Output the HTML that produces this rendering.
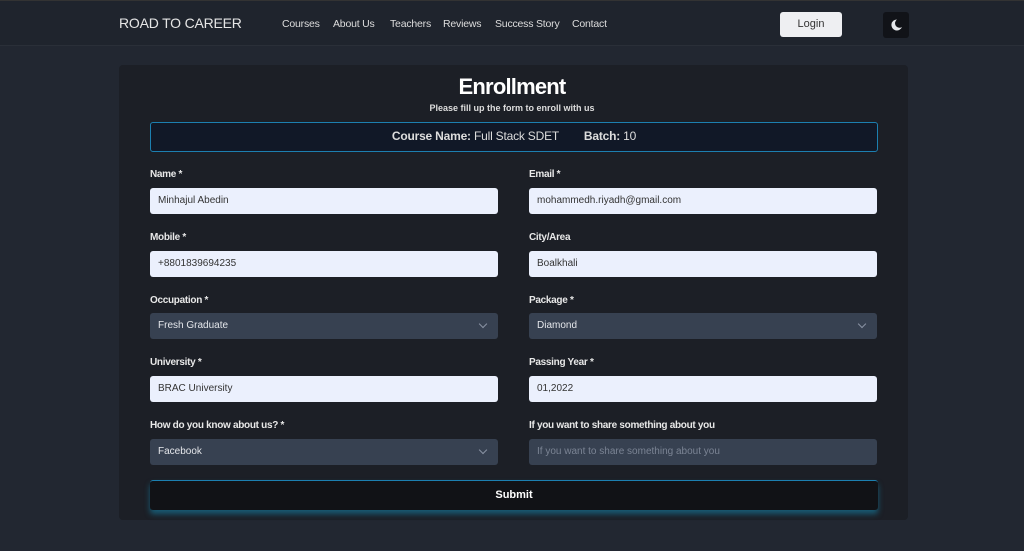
<!DOCTYPE html>
<html><head><style>
*{box-sizing:border-box;margin:0;padding:0}
body{width:1024px;height:551px;background:#222731;font-family:"Liberation Sans",sans-serif;position:relative;overflow:hidden;color:#fff}
.hdr{position:absolute;left:0;top:0;width:1024px;height:46px;background:#1f242d;border-top:1px solid #333;border-bottom:1px solid #2a2f38}
.logo{position:absolute;left:119px;top:14px;font-size:14px;color:#e6e6e6;letter-spacing:-.2px}
.nav{position:absolute;top:17px;font-size:10.5px;color:#ddd;letter-spacing:-.2px}
.login{position:absolute;left:780px;top:11px;width:62px;height:25px;background:#eeeff2;border-radius:3px;color:#333;font-size:11px;text-align:center;line-height:25px}
.moon{position:absolute;left:883px;top:11px;width:26px;height:26px;background:#111318;border-radius:3px}
.card{position:absolute;left:119px;top:65px;width:789px;height:455px;background:#1c1f26;border-radius:4px}
.a{position:absolute}
.lbl{position:absolute;font-size:10px;font-weight:bold;color:#e8e8e8;letter-spacing:-.3px}
.in{position:absolute;width:348px;height:26px;border-radius:3px;background:#ebf0fd;color:#333;font-size:10px;padding-left:8px;line-height:26px}
.sel{background:#374151;color:#e5e7eb}
.sel:after{content:"";position:absolute;right:12px;top:8px;width:5px;height:5px;border-right:1px solid #8a93a3;border-bottom:1px solid #8a93a3;transform:rotate(45deg)}
</style></head><body>
<div class="hdr">
<div class="logo">ROAD TO CAREER</div>
<div class="nav" style="left:282px">Courses</div>
<div class="nav" style="left:333px">About Us</div>
<div class="nav" style="left:390px">Teachers</div>
<div class="nav" style="left:443px">Reviews</div>
<div class="nav" style="left:495px">Success Story</div>
<div class="nav" style="left:572px">Contact</div>
<div class="login">Login</div>
<div class="moon"><svg width="26" height="26" viewBox="0 0 26 26"><path d="M14 7.5a5.5 5.5 0 1 0 5 7.5a4.3 4.3 0 0 1-5-7.5z" fill="#e5e7eb"/></svg></div>
</div>
<div class="card"></div>
<div class="a" style="left:0;width:1024px;top:74px;text-align:center;font-size:22px;font-weight:bold;letter-spacing:-.8px">Enrollment</div>
<div class="a" style="left:0;width:1024px;top:103px;text-align:center;font-size:9px;font-weight:bold;color:#ddd">Please fill up the form to enroll with us</div>
<div class="a" style="left:150px;top:122px;width:728px;height:30px;background:#111827;border:1.5px solid #1c7fb0;border-radius:3px;text-align:center;line-height:27px;font-size:12px;color:#ddd;letter-spacing:-.2px"><b>Course Name:</b> Full Stack SDET &nbsp;&nbsp;&nbsp;&nbsp;&nbsp;&nbsp;&nbsp;<b>Batch:</b> 10</div>

<div class="lbl" style="left:150px;top:169px">Name *</div>
<div class="in" style="left:150px;top:188px">Minhajul Abedin</div>
<div class="lbl" style="left:529px;top:169px">Email *</div>
<div class="in" style="left:529px;top:188px">mohammedh.riyadh@gmail.com</div>

<div class="lbl" style="left:150px;top:232px">Mobile *</div>
<div class="in" style="left:150px;top:251px">+8801839694235</div>
<div class="lbl" style="left:529px;top:232px">City/Area</div>
<div class="in" style="left:529px;top:251px">Boalkhali</div>

<div class="lbl" style="left:150px;top:295px">Occupation *</div>
<div class="in sel" style="left:150px;top:313px">Fresh Graduate</div>
<div class="lbl" style="left:529px;top:295px">Package *</div>
<div class="in sel" style="left:529px;top:313px">Diamond</div>

<div class="lbl" style="left:150px;top:357px">University *</div>
<div class="in" style="left:150px;top:376px">BRAC University</div>
<div class="lbl" style="left:529px;top:357px">Passing Year *</div>
<div class="in" style="left:529px;top:376px">01,2022</div>

<div class="lbl" style="left:150px;top:420px">How do you know about us? *</div>
<div class="in sel" style="left:150px;top:439px">Facebook</div>
<div class="lbl" style="left:529px;top:420px">If you want to share something about you</div>
<div class="in" style="left:529px;top:439px;background:#374151;color:#7b8494">If you want to share something about you</div>

<div class="a" style="left:150px;top:480px;width:728px;height:30px;background:#111216;border-top:1.5px solid #1c7fb0;border-radius:3px;box-shadow:0 4px 6px rgba(22,140,180,.55);text-align:center;line-height:29px;font-size:11px;font-weight:bold">Submit</div>
</body></html>
